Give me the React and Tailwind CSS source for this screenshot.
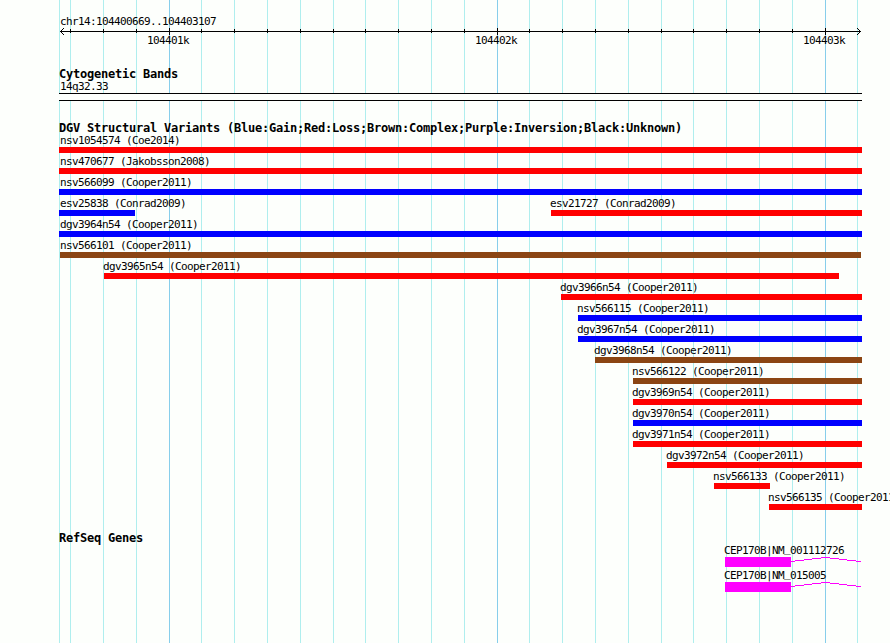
import React from "react";

// track area runs from x=59 to x=862
const TRACK_START = 59;

const gridLines = [
  59, 70, 103, 136, 169, 201, 234, 267, 300, 333, 365, 398, 431, 464, 497, 529,
  562, 595, 628, 661, 693, 726, 759, 792, 825, 857,
];

const majorTicks = [
  { x: 169, label: "104401k" },
  { x: 497, label: "104402k" },
  { x: 825, label: "104403k" },
];

const colors = {
  gain: "bg-[#0000ff]",
  loss: "bg-[#ff0000]",
  complex: "bg-[#8b4513]",
};

const variantRows = [
  [{ name: "nsv1054574 (Coe2014)", start: 59, end: 862, type: "loss" }],
  [{ name: "nsv470677 (Jakobsson2008)", start: 59, end: 862, type: "loss" }],
  [{ name: "nsv566099 (Cooper2011)", start: 59, end: 862, type: "gain" }],
  [
    { name: "esv25838 (Conrad2009)", start: 59, end: 135, type: "gain" },
    { name: "esv21727 (Conrad2009)", start: 551, end: 862, type: "loss" },
  ],
  [{ name: "dgv3964n54 (Cooper2011)", start: 59, end: 862, type: "gain" }],
  [{ name: "nsv566101 (Cooper2011)", start: 60, end: 861, type: "complex" }],
  [{ name: "dgv3965n54 (Cooper2011)", start: 104, end: 839, type: "loss" }],
  [{ name: "dgv3966n54 (Cooper2011)", start: 561, end: 862, type: "loss" }],
  [{ name: "nsv566115 (Cooper2011)", start: 578, end: 862, type: "gain" }],
  [{ name: "dgv3967n54 (Cooper2011)", start: 578, end: 862, type: "gain" }],
  [{ name: "dgv3968n54 (Cooper2011)", start: 595, end: 862, type: "complex" }],
  [{ name: "nsv566122 (Cooper2011)", start: 633, end: 862, type: "complex" }],
  [{ name: "dgv3969n54 (Cooper2011)", start: 633, end: 862, type: "loss" }],
  [{ name: "dgv3970n54 (Cooper2011)", start: 633, end: 862, type: "gain" }],
  [{ name: "dgv3971n54 (Cooper2011)", start: 633, end: 862, type: "loss" }],
  [{ name: "dgv3972n54 (Cooper2011)", start: 667, end: 862, type: "loss" }],
  [{ name: "nsv566133 (Cooper2011)", start: 714, end: 770, type: "loss" }],
  [{ name: "nsv566135 (Cooper2011)", start: 769, end: 862, type: "loss" }],
];

const genes = ["CEP170B|NM_001112726", "CEP170B|NM_015005"];

function Grid() {
  return (
    <div className="absolute inset-0">
      {gridLines.map((x) => (
        <div
          key={x}
          className={`absolute inset-y-0 w-px ${
            majorTicks.some((t) => t.x === x) ? "bg-[#87ceeb]" : "bg-[#afeeee]"
          }`}
          style={{ left: x }}
        />
      ))}
    </div>
  );
}

function Ruler() {
  return (
    <svg width="890" height="30" className="block" shapeRendering="crispEdges">
      <rect x="60" y="4" width="801" height="1" />
      {gridLines.slice(1, -1).map((x) => {
        const major = majorTicks.some((t) => t.x === x);
        return (
          <rect key={x} x={x} y={major ? 1 : 2} width="1" height={major ? 7 : 4} />
        );
      })}
      {/* arrow heads, one square per step */}
      {[1, 2, 3].map((d) => (
        <g key={d}>
          <rect x={60 + d} y={4 - d} width="1" height="1" />
          <rect x={60 + d} y={4 + d} width="1" height="1" />
          <rect x={860 - d} y={4 - d} width="1" height="1" />
          <rect x={860 - d} y={4 + d} width="1" height="1" />
        </g>
      ))}
      {majorTicks.map((t) => (
        <text key={t.x} x={t.x - 22} y="17" shapeRendering="auto">
          {t.label}
        </text>
      ))}
    </svg>
  );
}

function TrackTitle({ children }) {
  return (
    <h2 className="ml-[59px] h-[14px] text-[12px] leading-[14px] font-bold tracking-[-0.225px]">
      {children}
    </h2>
  );
}

function VariantRow({ items }) {
  return (
    <div className="flex h-[21px]">
      {items.map((item, i) => {
        const prev = i > 0 ? items[i - 1].end : 0;
        return (
          <div
            key={item.name}
            className="shrink-0"
            style={{ marginLeft: item.start - prev, width: item.end - item.start }}
          >
            <div
              className={`h-[15px] pt-[2px] ${
                item.start === TRACK_START ? "ml-px" : item.start === 60 ? "ml-0" : "-ml-px"
              }`}
            >
              {item.name}
            </div>
            <div className={`h-[6px] ${colors[item.type]}`} />
          </div>
        );
      })}
    </div>
  );
}

function Gene({ name }) {
  // the underscore is raised so it stays clear of the exon box
  const [prefix, accession] = name.split("_");
  return (
    <div className="h-[25px] pl-[724px]">
      <div className="h-[13px]">
        {prefix}
        <span className="relative -top-[2px]">_</span>
        {accession}
      </div>
      <div className="ml-px flex h-[10px]">
        <div className="w-[66px] bg-[#ff00ff]" />
        <svg width="70" height="10" shapeRendering="crispEdges">
          <path
            d="M0 4.5h4m0 -1h9m0 -1h8m0 -1h9m0 -1h9m0 1h9m0 1h8m0 1h9m0 1h5"
            fill="none"
            stroke="#ff00ff"
          />
        </svg>
      </div>
    </div>
  );
}

export default function App() {
  return (
    <div className="relative h-[643px] w-[890px] overflow-hidden whitespace-pre bg-[#fdfffc] font-['DejaVu_Sans_Mono',monospace] text-[11px] leading-[13px] tracking-[-0.622px] text-black">
      <Grid />
      <div className="relative">
        <header className="pt-[15px]">
          <div className="ml-[60px] h-[12px]">chr14:104400669..104403107</div>
          <Ruler />
        </header>

        <section className="pt-[10px]">
          <TrackTitle>Cytogenetic Bands</TrackTitle>
          <div className="ml-[60px] h-[12px] leading-[11px]">14q32.33</div>
          <div className="ml-[59px] h-[8px] w-[803px] border-y border-black bg-[#fdfffc]" />
        </section>

        <section className="pt-[20px]">
          <TrackTitle>
            DGV Structural Variants (Blue:Gain;Red:Loss;Brown:Complex;Purple:Inversion;Black:Unknown)
          </TrackTitle>
          <div className="-mt-[3px]">
            {variantRows.map((items) => (
              <VariantRow key={items[0].name} items={items} />
            ))}
          </div>
        </section>

        <section className="pt-[21px]">
          <TrackTitle>RefSeq Genes</TrackTitle>
          <div className="-mt-px">
            {genes.map((name) => (
              <Gene key={name} name={name} />
            ))}
          </div>
        </section>
      </div>
    </div>
  );
}
